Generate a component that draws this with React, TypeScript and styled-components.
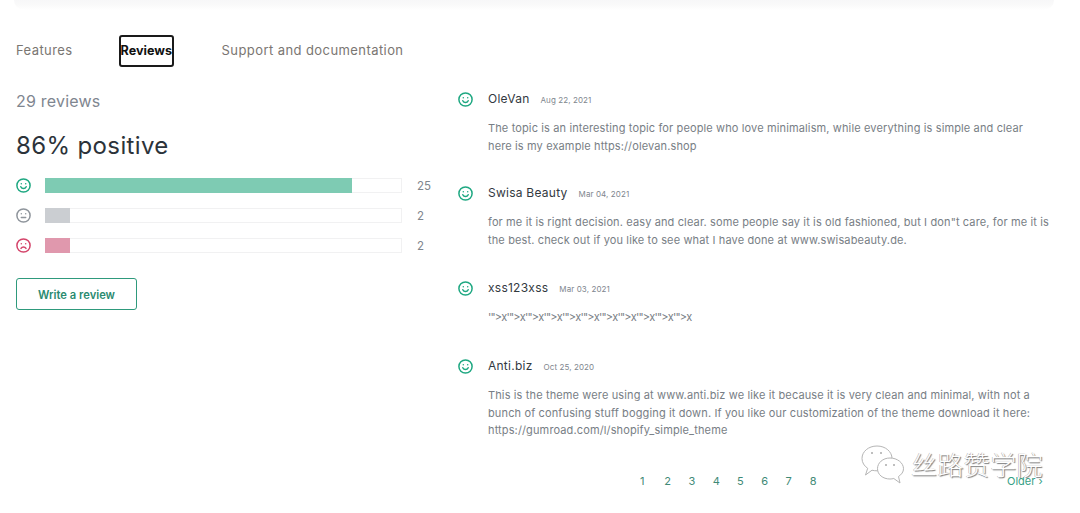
import React from "react";
import styled, { createGlobalStyle } from "styled-components";

const Global = createGlobalStyle`
  html, body { margin: 0; padding: 0; background: #fff; }
  body { font-family: "Inter", "Liberation Sans", sans-serif; overflow: hidden; }
`;

const Page = styled.div`
  position: relative;
  width: 1080px;
  height: 513px;
  overflow: hidden;
  background: #fff;
`;

const TopShadow = styled.div`
  height: 10px;
  margin: 0 26px 0 14px;
  background: linear-gradient(#f7f7f8, #fafafa 50%, #ffffff);
  border-radius: 0 0 14px 14px;
`;

const Tabs = styled.nav`
  display: flex;
  align-items: center;
  height: 32px;
  margin: 25px 0 0 16px;
`;

const Tab = styled.a<{ $active?: boolean; $gap: number }>`
  display: block;
  box-sizing: border-box;
  margin-right: ${(p) => p.$gap}px;
  padding-bottom: 2px;
  font-size: 13px;
  letter-spacing: 0.42px;
  color: #7a7672;
  white-space: nowrap;
  ${(p) =>
    p.$active &&
    `
    width: 55px;
    height: 32px;
    padding-bottom: 0;
    line-height: 28px;
    text-align: center;
    border: 2px solid #1a1a1a;
    border-radius: 3px;
    color: #111;
    font-weight: 700;
    letter-spacing: 0;
    font-size: 12.6px;
  `}
`;

const Columns = styled.div`
  display: flex;
  margin-top: 20px;
`;

const Summary = styled.section`
  width: 458px;
  flex: none;
  padding-left: 16px;
  box-sizing: border-box;
`;

const Count = styled.div`
  font-size: 16px;
  line-height: 20px;
  margin-top: 4px;
  color: #7f8690;
  letter-spacing: 0.2px;
`;

const Positive = styled.div`
  font-size: 24px;
  line-height: 32px;
  margin-top: 19px;
  color: #2c333a;
  letter-spacing: 0.37px;
`;

const Bars = styled.div`
  display: flex;
  flex-direction: column;
  gap: 15px;
  margin-top: 16px;
`;

const BarRow = styled.div`
  display: flex;
  align-items: center;
  height: 15px;
`;

const BarTrack = styled.div`
  width: 357px;
  height: 15px;
  box-sizing: border-box;
  margin-left: 14px;
  border: 1px solid #f1f1f2;
  flex: none;
  background: #fff;
`;

const BarFill = styled.div<{ $color: string }>`
  height: 15px;
  margin: -1px 0 0 -1px;
  background: ${(p) => p.$color};
`;

const BarCount = styled.span`
  margin-left: 15px;
  font-size: 11.5px;
  color: #80868e;
`;

const WriteButton = styled.a`
  display: flex;
  align-items: center;
  justify-content: center;
  width: 121px;
  height: 32px;
  margin-top: 25px;
  padding-top: 2px;
  box-sizing: border-box;
  border: 1px solid #2e9a7c;
  border-radius: 3px;
  font-size: 11.2px;
  font-weight: 600;
  color: #2a8a70;
`;

const ReviewList = styled.section`
  width: 595px;
  flex: none;
  margin-top: 3px;
`;

const Review = styled.article<{ $gap: number }>`
  display: flex;
  margin-bottom: ${(p) => p.$gap}px;
`;

const FaceSlot = styled.div`
  width: 15px;
  height: 15px;
  flex: none;
  margin: 1px 15px 0 0;
`;

const ReviewBody = styled.div`
  flex: 1;
`;

const ReviewHead = styled.div`
  display: flex;
  align-items: baseline;
  height: 18px;
  line-height: 18px;
`;

const Author = styled.span`
  font-size: 12px;
  letter-spacing: 0.25px;
  color: #33393f;
`;

const DateText = styled.span`
  margin-left: 11px;
  font-size: 8px;
  letter-spacing: 0.1px;
  color: #80868e;
`;

const Text = styled.p<{ $tight?: boolean }>`
  margin: 12px 0 0;
  font-size: 11px;
  line-height: 17.5px;
  color: #787e85;
  letter-spacing: ${(p) => (p.$tight ? "-0.8px" : "0.13px")};
  white-space: pre;
`;

const Pager = styled.div`
  position: absolute;
  top: 475px;
  left: 640px;
  display: flex;
  font-size: 11px;
  line-height: 13px;
  color: #3f8a76;
`;

const PageNum = styled.a`
  width: 24.25px;
`;

const Older = styled.a`
  position: absolute;
  top: 475px;
  left: 1007px;
  font-size: 11px;
  line-height: 13px;
  color: #35a085;
`;

const Watermark = styled.div`
  position: absolute;
  left: 860px;
  top: 444px;
  display: flex;
  align-items: center;
  gap: 6px;
  pointer-events: none;
`;

const WatermarkText = styled.span`
  font-family: "Noto Sans CJK SC", sans-serif;
  font-size: 26px;
  line-height: 40px;
  font-weight: 300;
  letter-spacing: 0.4px;
  color: #fff;
  text-shadow: 1px 1px 1px #777, -0.5px -0.5px 0.5px #aaa;
`;

type Mood = "good" | "ok" | "bad";
const moodColor: Record<Mood, string> = { good: "#1fa882", ok: "#8f959c", bad: "#d4456b" };

function Face({ mood }: { mood: Mood }) {
  const c = moodColor[mood];
  return (
    <svg width="15" height="15" viewBox="0 0 15 15" fill="none" stroke={c} strokeWidth="1.5" strokeLinecap="round">
      <circle cx="7.500" cy="7.500" r="6.600" />
      <circle cx="5.300" cy="5.800" r="0.750" fill={c} stroke="none" />
      <circle cx="9.700" cy="5.800" r="0.750" fill={c} stroke="none" />
      {mood === "good" && <path d="M4.800 8.700c.6 1.300 1.600 1.900 2.700 1.900s2.100-.6 2.700-1.900" />}
      {mood === "ok" && <path d="M5.300 9.600h4.400" />}
      {mood === "bad" && <path d="M5 10.400c.6-1 1.400-1.500 2.500-1.500s1.900.5 2.500 1.500" />}
    </svg>
  );
}

function WeChatMark() {
  return (
    <svg width="45" height="40" viewBox="0 0 45 40" fill="#fff" stroke="#b5b5b5" strokeWidth="1">
      <path d="M17 2C8.500 2 2 7.500 2 14.500c0 4 2.200 7.500 5.700 9.800L5.500 31l6.500-4.800c1.500.4 3.200.6 5 .6 8.500 0 15-5.500 15-12.300S25.500 2 17 2z" />
      <path d="M30 14c-7.200 0-12.500 4.800-12.500 10.700S22.800 35 30 35c1.300 0 2.600-.2 3.800-.5L40 39l-1.500-6.500c3-2 5-4.500 5-7.800C43.500 18.800 37.200 14 30 14z" />
      <circle cx="12" cy="9" r="1" fill="#aaa" stroke="none" />
      <circle cx="21" cy="9" r="1" fill="#aaa" stroke="none" />
      <circle cx="26" cy="21" r="1" fill="#aaa" stroke="none" />
      <circle cx="34" cy="21" r="1" fill="#aaa" stroke="none" />
    </svg>
  );
}

const bars: { mood: Mood; w: number; color: string; n: number }[] = [
  { mood: "good", w: 307, color: "#7ecbb3", n: 25 },
  { mood: "ok", w: 25, color: "#cbced2", n: 2 },
  { mood: "bad", w: 25, color: "#e098ad", n: 2 },
];

const reviews = [
  {
    a: "OleVan",
    d: "Aug 22, 2021",
    t: "The topic is an interesting topic for people who love minimalism, while everything is simple and clear\nhere is my example https://olevan.shop",
    g: 29,
  },
  {
    a: "Swisa Beauty",
    d: "Mar 04, 2021",
    t: "for me it is right decision. easy and clear. some people say it is old fashioned, but I don\"t care, for me it is\nthe best. check out if you like to see what I have done at www.swisabeauty.de.",
    g: 30,
  },
  { a: "xss123xss", d: "Mar 03, 2021", t: "'\">x'\">x'\">x'\">x'\">x'\">x'\">x'\">x'\">x'\">x'\">x", g: 30.5, tight: true },
  {
    a: "Anti.biz",
    d: "Oct 25, 2020",
    t: "This is the theme were using at www.anti.biz we like it because it is very clean and minimal, with not a\nbunch of confusing stuff bogging it down. If you like our customization of the theme download it here:\nhttps://gumroad.com/l/shopify_simple_theme",
    g: 0,
  },
];

export default function App() {
  return (
    <Page>
      <Global />
      <TopShadow />
      <Tabs>
        <Tab $gap={46}>Features</Tab>
        <Tab $active $gap={48}>Reviews</Tab>
        <Tab $gap={0}>Support and documentation</Tab>
      </Tabs>
      <Columns>
        <Summary>
          <Count>29 reviews</Count>
          <Positive>86% positive</Positive>
          <Bars>
            {bars.map((b) => (
              <BarRow key={b.mood}>
                <Face mood={b.mood} />
                <BarTrack>
                  <BarFill $color={b.color} style={{ width: b.w }} />
                </BarTrack>
                <BarCount>{b.n}</BarCount>
              </BarRow>
            ))}
          </Bars>
          <WriteButton>Write a review</WriteButton>
        </Summary>
        <ReviewList>
          {reviews.map((r) => (
            <Review key={r.a} $gap={r.g}>
              <FaceSlot>
                <Face mood="good" />
              </FaceSlot>
              <ReviewBody>
                <ReviewHead>
                  <Author>{r.a}</Author>
                  <DateText>{r.d}</DateText>
                </ReviewHead>
                <Text $tight={r.tight}>{r.t}</Text>
              </ReviewBody>
            </Review>
          ))}
        </ReviewList>
      </Columns>
      <Pager>
        {[1, 2, 3, 4, 5, 6, 7, 8].map((n) => (
          <PageNum key={n}>{n}</PageNum>
        ))}
      </Pager>
      <Older>Older ›</Older>
      <Watermark>
        <WeChatMark />
        <WatermarkText>丝路赞学院</WatermarkText>
      </Watermark>
    </Page>
  );
}
